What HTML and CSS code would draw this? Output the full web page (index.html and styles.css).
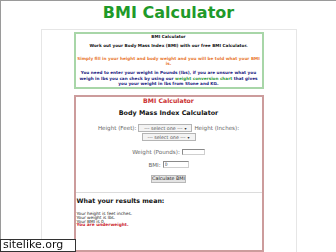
FILE: index.html
```html
<!DOCTYPE html>
<html lang="en">
<head>
<meta charset="utf-8">
<title>BMI Calculator</title>
<link rel="stylesheet" href="styles.css">
</head>
<body>
<div class="frame">
  <h1 class="title">BMI Calculator</h1>
  <div class="wrap">
    <div class="intro">
      <p class="p1">BMI Calculator</p>
      <p class="p2">Work out your Body Mass Index (BMI) with our free BMI Calculator.</p>
      <p class="p3">Simply fill in your height and body weight and you will be told what your BMI<br>is.</p>
      <p class="p4">You need to enter your weight in Pounds (lbs), if you are unsure what you<br>weigh in lbs you can check by using our <a class="link" href="#">weight conversion chart</a> that gives<br>you your weight in lbs from Stone and KG.</p>
    </div>
    <div class="calc">
      <div class="calc-head">BMI Calculator</div>
      <div class="calc-title">Body Mass Index Calculator</div>
      <form class="form">
        <div class="row row-1"><span>Height (Feet):</span><span class="select">--- select one ---<span class="arrow">&#9662;</span></span><span>Height (Inches):</span></div>
        <div class="row row-2"><span class="select">--- select one ---<span class="arrow">&#9662;</span></span></div>
        <div class="row row-w"><span>Weight (Pounds):</span><input class="field field-w" type="text"></div>
        <div class="row row-b"><span>BMI:</span><input class="field field-b" type="text" value="0"></div>
        <div class="row row-btn"><button class="btn" type="button">Calculate BMI</button></div>
      </form>
      <div class="sep"></div>
      <div class="results">
        <h2 class="res-title">What your results mean:</h2>
        <p class="res-text">Your height is feet inches.<br>Your weight is lbs.<br>Your BMI is 0<br><b class="under">You are underweight.</b></p>
      </div>
    </div>
  </div>
</div>
<div class="badge">sitelike.org</div>
</body>
</html>
```
FILE: styles.css
```css
html, body {
  margin: 0;
  padding: 0;
  overflow: hidden;
  background: #fff;
}
body {
  font-family: "DejaVu Sans", Verdana, sans-serif;
  color: #111;
}
.frame {
  height: 251px;
  overflow: hidden;
  border-top: 1px solid #9a9a9a;
  border-left: 1px solid #9a9a9a;
}
.title {
  margin: 3px 0 0;
  font-size: 16px;
  line-height: 18.6px;
  font-weight: bold;
  color: #1f9a2a;
  text-align: center;
}
.wrap {
  width: 256px;
  box-sizing: border-box;
  margin: 6px auto 0;
  border: 1px solid #e6e6e6;
  padding: 2px 32px 40px;
}
.intro {
  border: 2px solid #a8d6a8;
  padding: 0 1px;
  text-align: center;
  font-weight: bold;
  font-size: 4.2px;
  line-height: 5.5px;
  white-space: nowrap;
}
.intro p { margin: 0; }
.p1 { color: #111; }
.p2 { color: #111; margin-top: 4.15px !important; }
.p3 { color: #e8782f; margin-top: 6.8px !important; }
.p4 { color: #23237f; margin-top: 3.6px !important; }
.link { color: #2f9a3a; text-decoration: none; }

.calc {
  margin-top: 6.4px;
  border: 2px solid #cc9c9c;
  padding: 1px 0 23px;
  text-align: center;
}
.calc-head {
  font-size: 6.2px;
  line-height: 6px;
  font-weight: bold;
  color: #cc3333;
}
.calc-title {
  margin-top: 5px;
  font-size: 6.4px;
  line-height: 8px;
  font-weight: bold;
  color: #111;
}
.form {
  margin: 6.5px 0 0;
  font-size: 5.6px;
  color: #666;
}
.row {
  display: flex;
  justify-content: center;
  align-items: center;
  gap: 2px;
  height: 8px;
}
.row-1 { height: 9px; }
.row-2 { height: 9px; }
.row-w { margin-top: 6.5px; }
.row-b { margin-top: 4.5px; }
.row-btn { margin-top: 6.5px; }
.select {
  display: inline-flex;
  align-items: center;
  justify-content: center;
  gap: 2px;
  width: 54px;
  height: 8px;
  box-sizing: border-box;
  border: 1px solid #b4b4b4;
  background: #f3f3f3;
  font-size: 4.8px;
  color: #555;
}
.arrow {
  font-size: 4px;
  color: #333;
}
.field {
  box-sizing: border-box;
  margin: 0;
  padding: 0 1px;
  border: 1px solid;
  border-color: #8a8a8a #cfcfcf #cfcfcf #8a8a8a;
  background: #fff;
  font-family: "DejaVu Sans", Verdana, sans-serif;
  font-size: 4.8px;
  color: #333;
}
.field-w { width: 23px; height: 6px; }
.field-b { width: 26px; height: 7px; }
.btn {
  box-sizing: border-box;
  width: 35px;
  height: 8px;
  margin: 0;
  padding: 0;
  border: 1px solid #b8b8b8;
  background: #e4e4e4;
  font-family: "DejaVu Sans", Verdana, sans-serif;
  font-size: 4.8px;
  line-height: 6px;
  color: #222;
}
.sep {
  margin-top: 9px;
  border-top: 1px solid #dcdcdc;
}
.results {
  text-align: left;
  padding-left: 1px;
}
.res-title {
  margin: 4px 0 0;
  font-size: 6.3px;
  line-height: 8px;
  font-weight: bold;
  color: #111;
}
.res-text {
  margin: 7.2px 0 0;
  font-size: 4.3px;
  line-height: 3.7px;
  color: #222;
}
.under { color: #cc1f2f; }
.badge {
  position: fixed;
  left: 0;
  bottom: 0;
  width: 76px;
  height: 13px;
  box-sizing: border-box;
  border: 1px solid #333;
  background: #fff;
  padding-left: 2px;
  font-family: "DejaVu Sans", Verdana, sans-serif;
  font-size: 11px;
  line-height: 10px;
  color: #111;
}
```
